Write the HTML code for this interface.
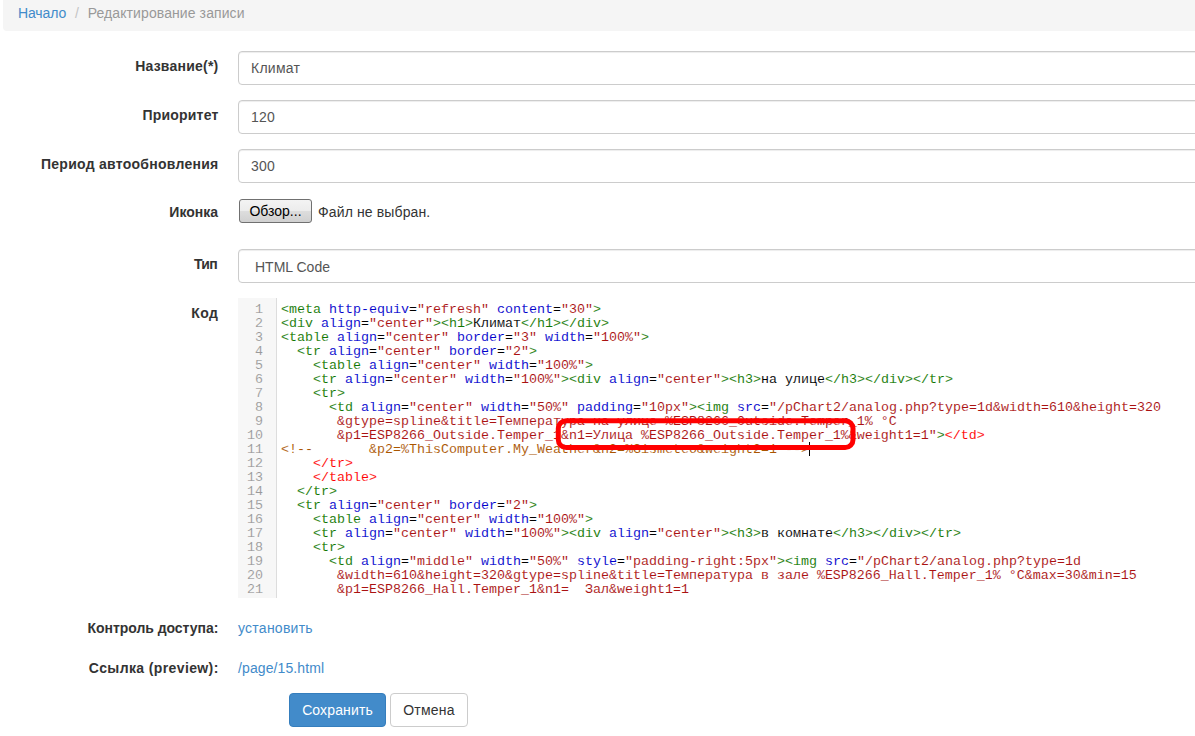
<!DOCTYPE html>
<html lang="ru"><head><meta charset="utf-8"><title>Редактирование записи</title>
<style>
html,body{margin:0;padding:0;background:#fff;}
body{width:1195px;height:736px;overflow:hidden;position:relative;font-family:"Liberation Sans",sans-serif;font-size:14px;line-height:20px;color:#333;}
a{color:#428bca;text-decoration:none;}
.bc{position:absolute;left:3px;top:-6px;width:1300px;height:37px;background:#f5f5f5;border-radius:4px;box-sizing:border-box;padding:9px 15px 0 15px;white-space:nowrap;color:#999;}
.bc .sep{color:#c4c4c4;padding:0 5px;}
.lab{position:absolute;left:0;width:218px;text-align:right;font-weight:bold;color:#333;white-space:nowrap;}
.inp{position:absolute;left:238px;width:1100px;height:34px;box-sizing:border-box;border:1px solid #ccc;border-radius:4px;background:#fff;padding:6px 12px;color:#555;box-shadow:inset 0 1px 1px rgba(0,0,0,.075);white-space:nowrap;}
.val{position:absolute;left:238px;white-space:nowrap;}
.fbtn{position:absolute;left:239px;top:199px;width:73px;height:24px;box-sizing:border-box;border:1px solid #707070;border-radius:3px;background:linear-gradient(#f3f3f3 0%,#ececec 48%,#dddddd 52%,#d0d0d0 100%);color:#000;text-align:center;line-height:22px;font-size:14px;}
.cm{position:absolute;left:238px;top:298px;width:1100px;height:300px;overflow:hidden;background:#fff;}
.cm .gut{position:absolute;left:0;top:0;width:38px;height:100%;background:#f7f7f7;border-right:1px solid #ddd;}
.cm .lines{position:absolute;left:0;top:5px;}
.ln{height:14px;position:relative;white-space:nowrap;}
.ln .no{position:absolute;left:0;top:0;width:25px;-webkit-text-stroke:0.1px #f7f7f7;text-align:right;color:#999;font-family:"Liberation Mono",monospace;font-size:13.33px;line-height:14px;}
.ln pre{margin:0;position:absolute;left:43px;-webkit-text-stroke:0.07px #fff;top:0;font-family:"Liberation Mono",monospace;font-size:13.33px;line-height:14px;color:#000;}
.t{color:#117700;} .a{color:#0000cc;} .s{color:#aa1111;} .c{color:#aa5500;} .e{color:#ff0000;}
.cur{position:absolute;left:571px;top:144px;width:1px;height:14px;background:#000;}
.btn{position:absolute;top:693px;height:34px;box-sizing:border-box;border-radius:4px;border:1px solid;padding:6px 12px;font-size:14px;line-height:20px;white-space:nowrap;text-align:center;}
.bp{left:289px;width:97px;background:#428bca;border-color:#357ebd;color:#fff;}
.bd{left:390px;width:78px;background:#fff;border-color:#ccc;color:#333;}
svg.mark{position:absolute;left:0;top:0;}
</style></head><body>
<div class="bc"><a style="letter-spacing:-.12px">Начало</a><span class="sep"> / </span><span style="letter-spacing:.09px">Редактирование записи</span></div>

<div class="lab" style="top:56px;width:218.53px;letter-spacing:.23px">Название(*)</div>
<div class="inp" style="top:51px;letter-spacing:.25px">Климат</div>
<div class="lab" style="top:105px;width:218.48px;letter-spacing:.18px">Приоритет</div>
<div class="inp" style="top:100px;letter-spacing:.25px">120</div>
<div class="lab" style="top:154px;width:218.57px;letter-spacing:.27px">Период автообновления</div>
<div class="inp" style="top:149px;letter-spacing:.25px">300</div>
<div class="lab" style="top:202px">Иконка</div>
<div class="fbtn">Обзор...</div>
<div class="val" style="left:318px;top:202px;letter-spacing:.13px">Файл не выбран.</div>
<div class="lab" style="top:254px;width:217.0px;letter-spacing:-.7px">Тип</div>
<div class="inp" style="top:249px;padding-left:16px;padding-top:7px">HTML Code</div>
<div class="lab" style="top:303px;width:218.2px;letter-spacing:.4px">Код</div>
<div class="cm"><div class="gut"></div><div class="lines">
<div class="ln"><span class="no">1</span><pre><span class="t">&lt;meta</span> <span class="a">http-equiv</span>=<span class="s">"refresh"</span> <span class="a">content</span>=<span class="s">"30"</span><span class="t">&gt;</span></pre></div>
<div class="ln"><span class="no">2</span><pre><span class="t">&lt;div</span> <span class="a">align</span>=<span class="s">"center"</span><span class="t">&gt;&lt;h1&gt;</span>Климат<span class="t">&lt;/h1&gt;&lt;/div&gt;</span></pre></div>
<div class="ln"><span class="no">3</span><pre><span class="t">&lt;table</span> <span class="a">align</span>=<span class="s">"center"</span> <span class="a">border</span>=<span class="s">"3"</span> <span class="a">width</span>=<span class="s">"100%"</span><span class="t">&gt;</span></pre></div>
<div class="ln"><span class="no">4</span><pre>  <span class="t">&lt;tr</span> <span class="a">align</span>=<span class="s">"center"</span> <span class="a">border</span>=<span class="s">"2"</span><span class="t">&gt;</span></pre></div>
<div class="ln"><span class="no">5</span><pre>    <span class="t">&lt;table</span> <span class="a">align</span>=<span class="s">"center"</span> <span class="a">width</span>=<span class="s">"100%"</span><span class="t">&gt;</span></pre></div>
<div class="ln"><span class="no">6</span><pre>    <span class="t">&lt;tr</span> <span class="a">align</span>=<span class="s">"center"</span> <span class="a">width</span>=<span class="s">"100%"</span><span class="t">&gt;&lt;div</span> <span class="a">align</span>=<span class="s">"center"</span><span class="t">&gt;&lt;h3&gt;</span>на улице<span class="t">&lt;/h3&gt;&lt;/div&gt;&lt;/tr&gt;</span></pre></div>
<div class="ln"><span class="no">7</span><pre>    <span class="t">&lt;tr&gt;</span></pre></div>
<div class="ln"><span class="no">8</span><pre>      <span class="t">&lt;td</span> <span class="a">align</span>=<span class="s">"center"</span> <span class="a">width</span>=<span class="s">"50%"</span> <span class="a">padding</span>=<span class="s">"10px"</span><span class="t">&gt;&lt;img</span> <span class="a">src</span>=<span class="s">"/pChart2/analog.php?type=1d&amp;width=610&amp;height=320</span></pre></div>
<div class="ln"><span class="no">9</span><pre><span class="s">       &amp;gtype=spline&amp;title=Температура на улице %ESP8266_Outside.Temper_1% °C</span></pre></div>
<div class="ln"><span class="no">10</span><pre><span class="s">       &amp;p1=ESP8266_Outside.Temper_1&amp;n1=Улица %ESP8266_Outside.Temper_1%&amp;weight1=1"</span><span class="t">&gt;</span><span class="e">&lt;/td&gt;</span></pre></div>
<div class="ln"><span class="no">11</span><pre><span class="c">&lt;!--       &amp;p2=%ThisComputer.My_Weather&amp;n2=%Gismeteo&amp;weight2=1 --&gt;</span></pre></div>
<div class="ln"><span class="no">12</span><pre>    <span class="e">&lt;/tr&gt;</span></pre></div>
<div class="ln"><span class="no">13</span><pre>    <span class="e">&lt;/table&gt;</span></pre></div>
<div class="ln"><span class="no">14</span><pre>  <span class="t">&lt;/tr&gt;</span></pre></div>
<div class="ln"><span class="no">15</span><pre>  <span class="t">&lt;tr</span> <span class="a">align</span>=<span class="s">"center"</span> <span class="a">border</span>=<span class="s">"2"</span><span class="t">&gt;</span></pre></div>
<div class="ln"><span class="no">16</span><pre>    <span class="t">&lt;table</span> <span class="a">align</span>=<span class="s">"center"</span> <span class="a">width</span>=<span class="s">"100%"</span><span class="t">&gt;</span></pre></div>
<div class="ln"><span class="no">17</span><pre>    <span class="t">&lt;tr</span> <span class="a">align</span>=<span class="s">"center"</span> <span class="a">width</span>=<span class="s">"100%"</span><span class="t">&gt;&lt;div</span> <span class="a">align</span>=<span class="s">"center"</span><span class="t">&gt;&lt;h3&gt;</span>в комнате<span class="t">&lt;/h3&gt;&lt;/div&gt;&lt;/tr&gt;</span></pre></div>
<div class="ln"><span class="no">18</span><pre>    <span class="t">&lt;tr&gt;</span></pre></div>
<div class="ln"><span class="no">19</span><pre>      <span class="t">&lt;td</span> <span class="a">align</span>=<span class="s">"middle"</span> <span class="a">width</span>=<span class="s">"50%"</span> <span class="a">style</span>=<span class="s">"padding-right:5px"</span><span class="t">&gt;&lt;img</span> <span class="a">src</span>=<span class="s">"/pChart2/analog.php?type=1d</span></pre></div>
<div class="ln"><span class="no">20</span><pre><span class="s">       &amp;width=610&amp;height=320&amp;gtype=spline&amp;title=Температура в зале %ESP8266_Hall.Temper_1% °C&amp;max=30&amp;min=15</span></pre></div>
<div class="ln"><span class="no">21</span><pre><span class="s">       &amp;p1=ESP8266_Hall.Temper_1&amp;n1=  Зал&amp;weight1=1</span></pre></div>
<div class="ln"><span class="no">22</span><pre><span class="s">       &amp;p2=ESP8266_Hall.Temper_2&amp;n2=  Зал2&amp;weight2=1"</span><span class="t">&gt;</span><span class="e">&lt;/td&gt;</span></pre></div>
</div><div class="cur"></div></div>
<svg class="mark" width="1195" height="736" viewBox="0 0 1195 736"><rect x="558.3" y="420.8" width="294.7" height="26.8" rx="7.8" ry="7.8" fill="none" stroke="#ff0000" stroke-width="5"/></svg>
<div class="lab" style="top:618px;width:218.30px;letter-spacing:-.04px">Контроль доступа:</div>
<div class="val" style="top:618px;letter-spacing:.25px"><a>установить</a></div>
<div class="lab" style="top:658px;width:218.68px;letter-spacing:.38px">Ссылка (preview):</div>
<div class="val" style="top:658px;letter-spacing:.1px"><a>/page/15.html</a></div>
<div class="btn bp" style="letter-spacing:.13px">Сохранить</div>
<div class="btn bd" style="letter-spacing:.25px">Отмена</div>
</body></html>
